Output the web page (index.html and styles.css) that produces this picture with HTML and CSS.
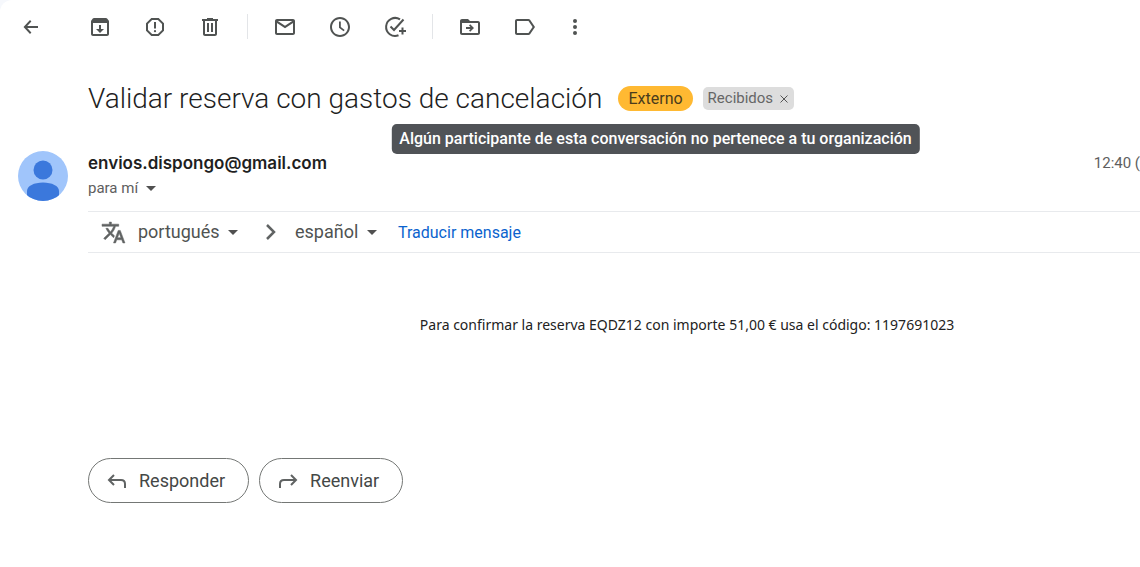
FILE: index.html
```html
<!DOCTYPE html>
<html lang="es">
<head>
    <meta charset="UTF-8">
    <meta name="viewport" content="width=device-width, initial-scale=1.0">
    <title>Validar reserva con gastos de cancelación</title>
    <link rel="stylesheet" href="styles.css">
</head>
<body>
    <div class="mail">
        <div class="toolbar">
            <button class="tool back" aria-label="Volver">
                <svg viewBox="0 0 24 24"><path d="M19 11H8.200l4.200-4.600L11 5l-6.500 7 6.500 7 1.400-1.400L8.200 13H19z"/></svg>
            </button>
            <button class="tool" aria-label="Archivar">
                <svg viewBox="0 0 24 24"><path d="M20.500 5.200l-1.400-1.700c-.3-.3-.7-.5-1.100-.5H6c-.5 0-.9.2-1.200.5L3.500 5.200c-.3.4-.5.8-.5 1.300V19c0 1.100.9 2 2 2h14c1.100 0 2-.9 2-2V6.500c0-.5-.2-.9-.5-1.300zM19 19H5V8h14v11zM11 10v4H8l4 4 4-4h-3v-4z"/></svg>
            </button>
            <button class="tool" aria-label="Marcar como spam">
                <svg viewBox="0 0 24 24"><path d="M15.700 3H8.300L3 8.300v7.400L8.300 21h7.400l5.300-5.300V8.300L15.700 3zM19 14.900L14.900 19H9.100L5 14.900V9.100L9.100 5h5.800L19 9.100v5.800z"/><path d="M11 7h2v6.500h-2z"/><circle cx="12" cy="16.200" r="1.100"/></svg>
            </button>
            <button class="tool" aria-label="Eliminar">
                <svg viewBox="0 0 24 24"><path d="M15 4V3H9v1H4v2h1v13c0 1.100.9 2 2 2h10c1.100 0 2-.9 2-2V6h1V4h-5zm2 15H7V6h10v13zM9 8h2v9H9zM13 8h2v9h-2z"/></svg>
            </button>
            <span class="divider"></span>
            <button class="tool" aria-label="Marcar como no leído">
                <svg viewBox="0 0 24 24"><path d="M20 4H4c-1.100 0-2 .9-2 2v12c0 1.100.9 2 2 2h16c1.100 0 2-.9 2-2V6c0-1.100-.9-2-2-2zm-.8 2L12 10.800 4.800 6h14.400zM4 18V7.900l8 5.300 8-5.300V18H4z"/></svg>
            </button>
            <button class="tool" aria-label="Posponer">
                <svg viewBox="0 0 24 24"><path d="M12 2C6.500 2 2 6.500 2 12s4.500 10 10 10 10-4.500 10-10S17.500 2 12 2zm0 18c-4.400 0-8-3.600-8-8s3.600-8 8-8 8 3.600 8 8-3.600 8-8 8zM12.800 6.500H11v6.200l4.600 3.600 1.100-1.400-3.900-3z"/></svg>
            </button>
            <button class="tool" aria-label="Añadir a Tasks">
                <svg viewBox="0 0 24 24"><g class="line"><path d="M17 4.400A9 9 0 1 0 15.500 20.300"/><path d="M7.500 11.500l3.500 3.500L20.500 4.500"/><path d="M19.500 12.500v7M16 16h7"/></g></svg>
            </button>
            <span class="divider"></span>
            <button class="tool" aria-label="Mover a">
                <svg viewBox="0 0 24 24"><path d="M20 6h-8l-2-2H4c-1.100 0-2 .9-2 2v12c0 1.100.9 2 2 2h16c1.100 0 2-.9 2-2V8c0-1.100-.9-2-2-2zm0 12H4V8h16v10zM12.200 9.200l-1.200 1.200 1.500 1.600H8v2h4.500L11 15.600l1.200 1.200L16 13z"/><path d="M4 5h6l2 3H4z"/></svg>
            </button>
            <button class="tool" aria-label="Etiquetas">
                <svg viewBox="0 0 24 24"><path d="M15.500 4H4c-1.100 0-2 .9-2 2v12c0 1.100.9 2 2 2h11.500c.6 0 1.200-.3 1.600-.8L22 12l-4.900-7.200c-.4-.5-1-.8-1.600-.8zm0 14H4V6h11.500l4.100 6-4.100 6z"/></svg>
            </button>
            <button class="tool more" aria-label="Más">
                <svg viewBox="0 0 24 24"><circle cx="12" cy="6" r="2"/><circle cx="12" cy="12" r="2"/><circle cx="12" cy="18" r="2"/></svg>
            </button>
        </div>

        <div class="subject">
            <h1>Validar reserva con gastos de cancelación</h1>
            <div class="external">
                <span class="external-badge">Externo</span>
                <div class="tooltip" role="tooltip">Algún participante de esta conversación no pertenece a tu organización</div>
            </div>
            <div class="label-chip">
                <span>Recibidos</span>
                <button aria-label="Quitar etiqueta">
                    <svg viewBox="0 0 8 8"><path d="M0.500 0.500l7 7M7.500 0.500l-7 7"/></svg>
                </button>
            </div>
        </div>

        <div class="message">
            <svg class="avatar" viewBox="0 0 50 50">
                <defs><clipPath id="circle"><circle cx="25" cy="25" r="25"/></clipPath></defs>
                <g clip-path="url(#circle)">
                    <rect width="50" height="50" fill="#a0c5fb"/>
                    <circle cx="25" cy="19" r="9.500" fill="#3b78dc"/>
                    <path d="M9 50V40c0-5 7-8.500 16-8.500S41 35 41 40v10z" fill="#3b78dc"/>
                </g>
            </svg>
            <div class="content">
                <div class="header">
                    <div class="sender">
                        <h2>envios.dispongo@gmail.com</h2>
                        <button class="recipient">para mí
                            <svg class="caret" viewBox="0 0 10 5"><path d="M0 0h10L5 5z"/></svg>
                        </button>
                    </div>
                    <span class="time">12:40 (</span>
                </div>

                <div class="translate">
                    <svg class="translate-icon" viewBox="0 0 24 24"><path d="M12.900 15.100l-2.600-2.500c1.800-1.900 3-4.200 3.700-6.600h3V4h-7V2H8v2H1v2h11.200C11.500 7.900 10.400 9.800 9 11.400 8.100 10.300 7.300 9.200 6.700 8h-2c.7 1.600 1.700 3.200 3 4.600l-5.100 5L4 19l5-5 3.100 3.100.8-2zM18.500 10h-2L12 22h2l1.100-3h4.800l1.100 3h2l-4.500-12zm-2.600 7l1.600-4.300 1.600 4.300h-3.200z"/></svg>
                    <div class="language from">
                        <select aria-label="Idioma de origen"><option>portugués</option></select>
                        <svg class="caret" viewBox="0 0 10 5"><path d="M0 0h10L5 5z"/></svg>
                    </div>
                    <svg class="chevron" viewBox="0 0 12 18"><path d="M2 2l7 7-7 7"/></svg>
                    <div class="language to">
                        <select aria-label="Idioma de destino"><option>español</option></select>
                        <svg class="caret" viewBox="0 0 10 5"><path d="M0 0h10L5 5z"/></svg>
                    </div>
                    <a href="#">Traducir mensaje</a>
                </div>

                <p class="text">Para confirmar la reserva EQDZ12 con importe 51,00 € usa el código: 1197691023</p>

                <div class="actions">
                    <button>
                        <svg viewBox="0 0 20 16"><path d="M7 2L2 7l5 5M2 7h12q4 0 4 4v4"/></svg>
                        Responder
                    </button>
                    <button>
                        <svg viewBox="0 0 20 16"><path d="M13 2l5 5-5 5M18 7H6q-4 0-4 4v4"/></svg>
                        Reenviar
                    </button>
                </div>
            </div>
        </div>
    </div>
</body>
</html>
```

FILE: styles.css
```css
* {
    box-sizing: border-box;
}
body {
    margin: 0;
    background-color: #f6f8fc;
    font-family: Roboto, "Liberation Sans", sans-serif;
    color: #1f1f1f;
    overflow-x: hidden;
}
h1, h2, p {
    margin: 0;
    font-weight: normal;
}
button {
    margin: 0;
    padding: 0;
    border: none;
    background: none;
    font-family: inherit;
    color: inherit;
    cursor: pointer;
}
.mail {
    min-height: 100vh;
    background-color: #fff;
    border-top-left-radius: 12px;
}

/* Toolbar */
.toolbar {
    display: flex;
    align-items: center;
    height: 53px;
    padding-left: 3px;
}
.tool {
    display: flex;
    justify-content: center;
    width: 55px;
}
.tool.back {
    margin-right: 14px;
}
.tool.more {
    width: 45px;
}
.tool svg {
    width: 24px;
    height: 24px;
    fill: #505352;
}
.tool .line {
    fill: none;
    stroke: #505352;
    stroke-width: 2;
}
.divider {
    width: 1px;
    height: 25px;
    margin: 0 9px 0 10px;
    background-color: #e3e5e8;
}

/* Subject */
.subject {
    display: flex;
    align-items: center;
    height: 91px;
    padding-left: 88px;
}
h1 {
    font-size: 28px;
    font-weight: 300;
    line-height: 36px;
}
.external {
    position: relative;
    margin: 0 10px 0 16px;
}
.external-badge {
    display: block;
    padding: 0 10px;
    border-radius: 13px;
    background-color: #ffb932;
    color: #4a3c1c;
    font-size: 16px;
    line-height: 25px;
}
.tooltip {
    position: absolute;
    top: 38px;
    left: 50%;
    transform: translateX(-50%);
    padding: 0 8px;
    border-radius: 5px;
    background-color: #505357;
    color: #fff;
    font-size: 16px;
    font-weight: 500;
    line-height: 30px;
    white-space: nowrap;
}
.label-chip {
    display: flex;
    align-items: center;
    gap: 7px;
    padding: 0 6px 0 5px;
    border-radius: 5px;
    background-color: #ddd;
    color: #666;
    font-size: 15px;
    line-height: 23px;
}
.label-chip button {
    display: flex;
}
.label-chip svg {
    width: 8px;
    height: 8px;
    stroke: #555;
    fill: none;
}

/* Message */
.message {
    display: flex;
    align-items: flex-start;
    gap: 20px;
    padding-left: 18px;
}
.avatar {
    flex: none;
    width: 50px;
    height: 50px;
    margin-top: 7px;
}
.content {
    flex: 1;
}
.header {
    display: flex;
    justify-content: space-between;
    height: 67px;
    padding-top: 7px;
}
.header h2 {
    font-family: Inter, Roboto, sans-serif;
    font-size: 17px;
    font-weight: 600;
    line-height: 24px;
}
.recipient {
    display: flex;
    align-items: center;
    gap: 8px;
    font-size: 15px;
    line-height: 26px;
    color: #5e5e5e;
}
.caret {
    width: 10px;
    height: 5px;
    fill: #505050;
    pointer-events: none;
}
.time {
    font-size: 15px;
    line-height: 24px;
    color: #5e5e5e;
}
.translate {
    display: flex;
    align-items: center;
    height: 42px;
    padding-left: 13px;
    border-top: 1px solid #e8eaed;
    border-bottom: 1px solid #e8eaed;
}
.translate-icon {
    width: 25px;
    height: 25px;
    margin-right: 12px;
    fill: #606363;
    stroke: #606363;
    stroke-width: 0.5;
}
.language {
    display: flex;
    align-items: center;
    gap: 8px;
}
.language select {
    appearance: none;
    padding: 0;
    border: none;
    background: none;
    font-family: inherit;
    font-size: 18px;
    line-height: 24px;
    color: #505352;
}
.chevron {
    width: 12px;
    height: 18px;
    margin: 0 18px 0 27px;
    fill: none;
    stroke: #606363;
    stroke-width: 2.5;
}
.translate a {
    margin-left: 21px;
    font-size: 16px;
    color: #0b63ce;
    text-decoration: none;
}
.text {
    padding: 62px 0 123px 146px;
    text-align: center;
    font-family: "Noto Sans", "DejaVu Sans", sans-serif;
    font-size: 14px;
    line-height: 20px;
    color: #222;
}
.actions {
    display: flex;
    gap: 10px;
}
.actions button {
    display: flex;
    align-items: center;
    gap: 12px;
    height: 45px;
    padding: 0 23px 0 18px;
    border: 1px solid #747775;
    border-radius: 23px;
    font-size: 18px;
    color: #444746;
}
.actions svg {
    width: 20px;
    height: 16px;
    fill: none;
    stroke: #606363;
    stroke-width: 2;
}
```
